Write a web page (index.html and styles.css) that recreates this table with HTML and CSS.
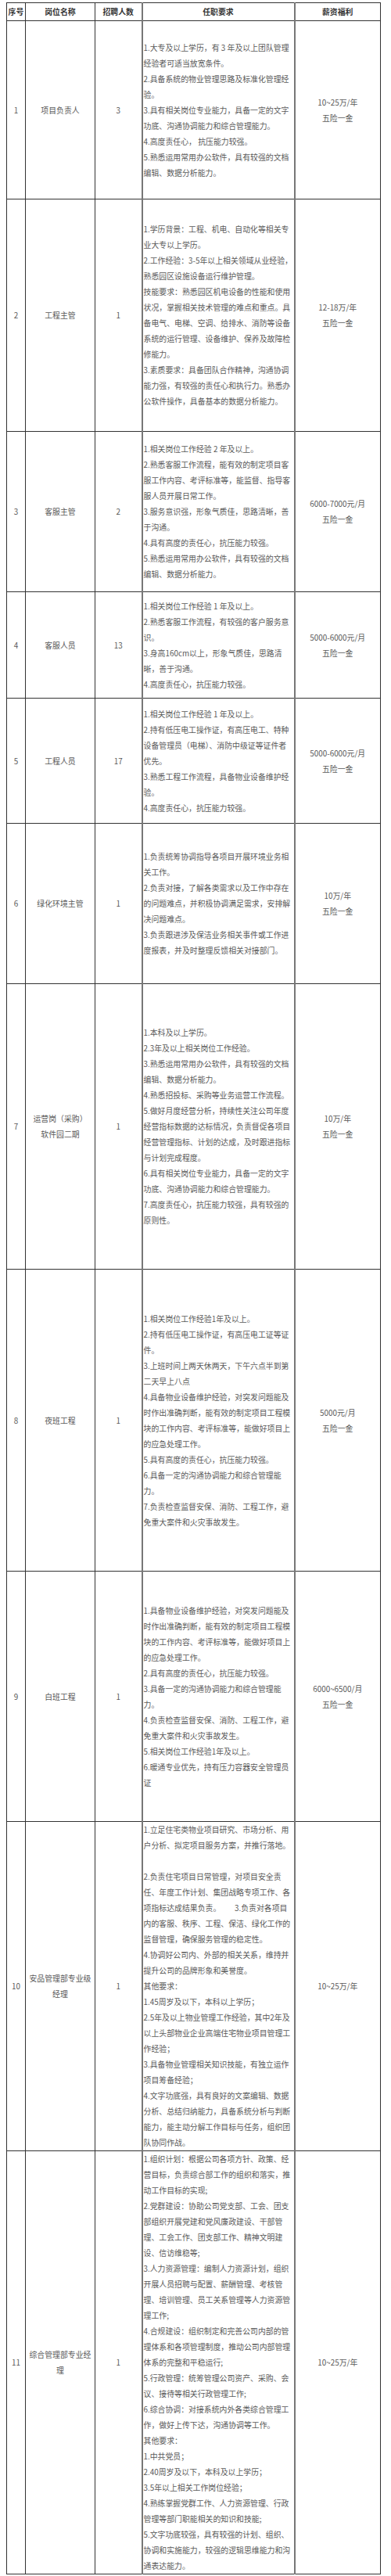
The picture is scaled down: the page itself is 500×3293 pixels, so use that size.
FILE: index.html
```html
<!DOCTYPE html>
<html lang="zh-CN">
<head>
<meta charset="utf-8">
<title>招聘岗位</title>
<link rel="stylesheet" href="styles.css">
</head>
<body>
<table class="jobs">
  <colgroup>
    <col class="c-no"><col class="c-name"><col class="c-count"><col class="c-req"><col class="c-pay">
  </colgroup>
  <thead>
    <tr class="head"><th>序号</th><th>岗位名称</th><th>招聘人数</th><th class="req-h">任职要求</th><th>薪资福利</th></tr>
  </thead>
  <tbody>
    <tr class="r1">
      <td>1</td><td>项目负责人</td><td>3</td>
      <td class="req">1.大专及以上学历，有 3 年及以上团队管理<br>经验者可适当放宽条件。<br>2.具备系统的物业管理思路及标准化管理经<br>验。<br>3.具有相关岗位专业能力，具备一定的文字<br>功底、沟通协调能力和综合管理能力。<br>4.高度责任心， 抗压能力较强。<br>5.熟悉运用常用办公软件，具有较强的文档<br>编辑、数据分析能力。</td>
      <td>10~25万/年<br>五险一金</td>
    </tr>
    <tr class="r2">
      <td>2</td><td>工程主管</td><td>1</td>
      <td class="req">1.学历背景：工程、机电、自动化等相关专<br>业大专以上学历。<br>2.工作经验：3-5年以上相关领域从业经验，<br>熟悉园区设施设备运行维护管理。<br>技能要求：熟悉园区机电设备的性能和使用<br>状况，掌握相关技术管理的难点和重点。具<br>备电气、电梯、空调、给排水、消防等设备<br>系统的运行管理、设备维护、保养及故障检<br>修能力。<br>3.素质要求：具备团队合作精神，沟通协调<br>能力强，有较强的责任心和执行力。熟悉办<br>公软件操作，具备基本的数据分析能力。</td>
      <td>12-18万/年<br>五险一金</td>
    </tr>
    <tr class="r3">
      <td>3</td><td>客服主管</td><td>2</td>
      <td class="req">1.相关岗位工作经验 2 年及以上。<br>2.熟悉客服工作流程，能有效的制定项目客<br>服工作内容、考评标准等，能监督、指导客<br>服人员开展日常工作。<br>3.服务意识强，形象气质佳，思路清晰，善<br>于沟通。<br>4.具有高度的责任心，抗压能力较强。<br>5.熟悉运用常用办公软件，具有较强的文档<br>编辑、数据分析能力。</td>
      <td>6000-7000元/月<br>五险一金</td>
    </tr>
    <tr class="r4">
      <td>4</td><td>客服人员</td><td>13</td>
      <td class="req">1.相关岗位工作经验 1 年及以上。<br>2.熟悉客服工作流程，有较强的客户服务意<br>识。<br>3.身高160cm以上，形象气质佳，思路清<br>晰，善于沟通。<br>4.高度责任心，抗压能力较强。</td>
      <td>5000-6000元/月<br>五险一金</td>
    </tr>
    <tr class="r5">
      <td>5</td><td>工程人员</td><td>17</td>
      <td class="req">1.相关岗位工作经验 1 年及以上。<br>2.持有低压电工操作证，有高压电工、特种<br>设备管理员（电梯）、消防中级证等证件者<br>优先。<br>3.熟悉工程工作流程，具备物业设备维护经<br>验。<br>4.高度责任心，抗压能力较强。</td>
      <td>5000-6000元/月<br>五险一金</td>
    </tr>
    <tr class="r6">
      <td>6</td><td>绿化环境主管</td><td>1</td>
      <td class="req">1.负责统筹协调指导各项目开展环境业务相<br>关工作。<br>2.负责对接，了解各类需求以及工作中存在<br>的问题难点，并积极协调满足需求，安排解<br>决问题难点。<br>3.负责跟进涉及保洁业务相关事件或工作进<br>度报表，并及时整理反馈相关对接部门。</td>
      <td>10万/年<br>五险一金</td>
    </tr>
    <tr class="r7">
      <td>7</td><td>运营岗（采购）<br>软件园二期</td><td>1</td>
      <td class="req">1.本科及以上学历。<br>2.3年及以上相关岗位工作经验。<br>3.熟悉运用常用办公软件，具有较强的文档<br>编辑、数据分析能力。<br>4.熟悉招投标、采购等业务运营工作流程。<br>5.做好月度经营分析，持续性关注公司年度<br>经营指标数据的达标情况，负责督促各项目<br>经营管理指标、计划的达成，及时跟进指标<br>与计划完成程度。<br>6.具有相关岗位专业能力，具备一定的文字<br>功底、沟通协调能力和综合管理能力。<br>7.高度责任心，抗压能力较强，具有较强的<br>原则性。</td>
      <td>10万/年<br>五险一金</td>
    </tr>
    <tr class="r8">
      <td>8</td><td>夜班工程</td><td>1</td>
      <td class="req">1.相关岗位工作经验1年及以上。<br>2.持有低压电工操作证，有高压电工证等证<br>件。<br>3.上班时间上两天休两天，下午六点半到第<br>二天早上八点<br>4.具备物业设备维护经验，对突发问题能及<br>时作出准确判断，能有效的制定项目工程模<br>块的工作内容、考评标准等，能做好项目上<br>的应急处理工作。<br>5.具有高度的责任心，抗压能力较强。<br>6.具备一定的沟通协调能力和综合管理能<br>力。<br>7.负责检查监督安保、消防、工程工作，避<br>免重大案件和火灾事故发生。</td>
      <td>5000元/月<br>五险一金</td>
    </tr>
    <tr class="r9">
      <td>9</td><td>白班工程</td><td>1</td>
      <td class="req">1.具备物业设备维护经验，对突发问题能及<br>时作出准确判断，能有效的制定项目工程模<br>块的工作内容、考评标准等，能做好项目上<br>的应急处理工作。<br>2.具有高度的责任心，抗压能力较强。<br>3.具备一定的沟通协调能力和综合管理能<br>力。<br>4.负责检查监督安保、消防、工程工作，避<br>免重大案件和火灾事故发生。<br>5.相关岗位工作经验1年及以上。<br>6.暖通专业优先，持有压力容器安全管理员<br>证</td>
      <td>6000~6500/月<br>五险一金</td>
    </tr>
    <tr class="r10">
      <td>10</td><td>安品管理部专业级<br>经理</td><td>1</td>
      <td class="req">1.立足住宅类物业项目研究、市场分析、用<br>户分析、拟定项目服务方案，并推行落地。<br><br>2.负责住宅项目日常管理，对项目安全责<br>任、年度工作计划、集团战略专项工作、各<br>项指标达成结果负责。&nbsp;&nbsp;&nbsp;&nbsp;&nbsp;&nbsp;&nbsp;&nbsp;3.负责对各项目<br>内的客服、秩序、工程、保洁、绿化工作的<br>监督管理，确保服务管理的稳定性。<br>4.协调好公司内、外部的相关关系，维持并<br>提升公司的品牌形象和美誉度。<br>其他要求：<br>1.45周岁及以下，本科以上学历；<br>2.5年及以上物业管理工作经验，其中2年及<br>以上头部物业企业高端住宅物业项目管理工<br>作经验；<br>3.具备物业管理相关知识技能，有独立运作<br>项目筹备经验；<br>4.文字功底强，具有良好的文案编辑、数据<br>分析、总结归纳能力，具备系统分析与判断<br>能力，能主动分解工作目标与任务，组织团<br>队协同作战。</td>
      <td>10~25万/年</td>
    </tr>
    <tr class="r11">
      <td>11</td><td>综合管理部专业经<br>理</td><td>1</td>
      <td class="req">1.组织计划：根据公司各项方针、政策、经<br>营目标，负责综合部工作的组织和落实，推<br>动工作目标的实现;<br>2.党群建设：协助公司党支部、工会、团支<br>部组织开展党建和党风廉政建设、干部管<br>理、工会工作、团支部工作、精神文明建<br>设、信访维稳等;<br>3.人力资源管理：编制人力资源计划，组织<br>开展人员招聘与配置、薪酬管理、考核管<br>理、培训管理、员工关系管理等人力资源管<br>理工作;<br>4.合规建设：组织制定和完善公司内部的管<br>理体系和各项管理制度，推动公司内部管理<br>体系的完整和平稳运行;<br>5.行政管理：统筹管理公司资产、采购、会<br>议、接待等相关行政管理工作;<br>6.综合协调：对接系统内外各类综合管理工<br>作，做好上传下达，沟通协调等工作。<br>其他要求：<br>1.中共党员；<br>2.40周岁及以下，本科及以上学历；<br>3.5年以上相关工作岗位经验；<br>4.熟练掌握党群工作、人力资源管理、行政<br>管理等部门职能相关的知识和技能;<br>5.文字功底较强，具有较强的计划、组织、<br>协调和实施能力，较强的逻辑思维能力和沟<br>通表达能力。</td>
      <td>10~25万/年</td>
    </tr>
  </tbody>
</table>
</body>
</html>
```

FILE: styles.css
```css
html, body {
  margin: 0;
  padding: 0;
  background: #fff;
}

body {
  padding: 3px 0 0 8px;
  font-family: "Noto Sans CJK SC", "Noto Sans", sans-serif;
}

.jobs {
  border-collapse: collapse;
  table-layout: fixed;
  width: 478px;
  font-size: 9.9px;
  line-height: 20px;
  color: #5a5a5a;
}

.c-no { width: 24px; }
.c-name { width: 89px; }
.c-count { width: 60px; }
.c-req { width: 195px; }
.c-pay { width: 110px; }

.jobs th,
.jobs td {
  border: 1px solid #333;
  padding: 0;
  text-align: center;
  vertical-align: middle;
}

.jobs th {
  font-weight: bold;
  color: #333;
}

.jobs .req-h,
.jobs .req {
  border-left: 2px solid #777;
  border-right: 2px solid #777;
}

.jobs .req {
  text-align: left;
  white-space: nowrap;
  padding-left: 1px;
  overflow: hidden;
}

.head { height: 23px; }
.r1 { height: 228px; }
.r2 { height: 297px; }
.r3 { height: 205px; }
.r4 { height: 136px; }
.r5 { height: 160px; }
.r6 { height: 205px; }
.r7 { height: 365px; }
.r8 { height: 386px; }
.r9 { height: 320px; }
.r10 { height: 419px; }
.r11 { height: 540px; }
```
